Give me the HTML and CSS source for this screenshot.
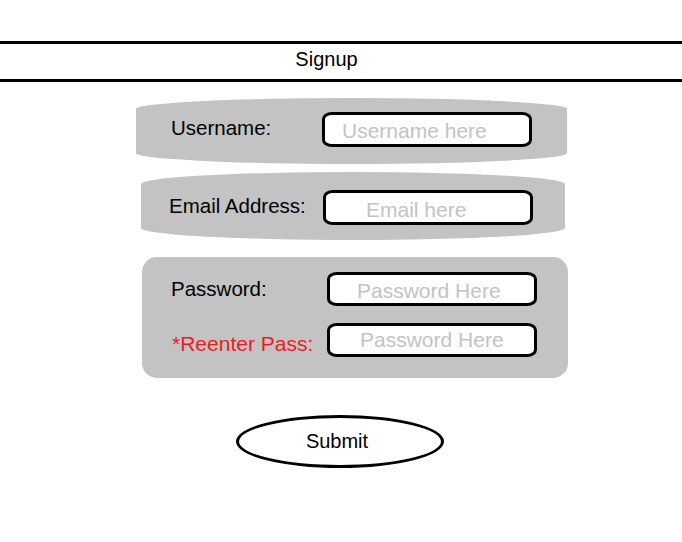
FILE: index.html
```html
<!DOCTYPE html>
<html lang="en">

<head>
    <meta charset="UTF-8">
    <meta name="viewport" content="width=device-width, initial-scale=1.0">
    <link rel="stylesheet" href="styles.css">
</head>

<body>
    <header class="title-bar">Signup</header>

    <form class="signup">
        <div class="group group-user">
            <label class="label label-user" for="user">Username:</label>
            <input class="field field-user" id="user" type="text" placeholder="Username here" />
        </div>

        <div class="group group-email">
            <label class="label label-email" for="email">Email Address:</label>
            <input class="field field-email" id="email" type="text" placeholder="Email here" />
        </div>

        <div class="group group-pass">
            <div class="pass-row">
                <label class="label label-pass" for="pass">Password:</label>
                <input class="field field-pass" id="pass" type="text" placeholder="Password Here" />
            </div>
            <div class="pass-row pass-row-again">
                <label class="label label-again" for="again">*Reenter Pass:</label>
                <input class="field field-again" id="again" type="text" placeholder="Password Here" />
            </div>
        </div>

        <button class="submit-btn" type="button">Submit</button>
    </form>
</body>

</html>
```

FILE: styles.css
```css
body {
    margin: 0;
    font-family: "Liberation Sans", Arial, sans-serif;
    font-size: 20px;
    color: #000;
    background: #fff;
}

.title-bar {
    margin-top: 41px;
    height: 31px;
    border-top: 3px solid #000;
    border-bottom: 3px solid #000;
    padding: 0 29px 4px 0;
    line-height: 31px;
    text-align: center;
}

.signup {
    display: flex;
    flex-direction: column;
    align-items: flex-start;
}

.group {
    display: flex;
    align-items: center;
    box-sizing: border-box;
    background-color: #c3c3c3;
}

.group-user {
    margin: 16px 0 0 136px;
    width: 431px;
    height: 66px;
    padding: 0 0 3px 35px;
    border-radius: 50% / 11px;
}

.group-email {
    margin: 8px 0 0 141px;
    width: 424px;
    height: 68px;
    padding: 3px 0 0 28px;
    border-radius: 50% / 12px;
}

.group-pass {
    flex-direction: column;
    align-items: flex-start;
    margin: 17px 0 0 142px;
    width: 426px;
    height: 121px;
    padding: 15px 0 0 29px;
    border-radius: 15px;
}

.pass-row {
    display: flex;
    align-items: center;
}

.pass-row-again {
    margin-top: 17px;
}

.label {
    font-size: 20.5px;
    line-height: 23px;
}

.label-user {
    width: 151px;
    margin-bottom: 4px;
}

.label-email {
    width: 154px;
    margin-bottom: 4px;
}

.label-pass {
    width: 156px;
    margin-bottom: 2px;
}

.label-again {
    width: 155px;
    margin-top: 6px;
    padding-left: 1px;
    font-size: 21px;
    color: #ed1c24;
}

.field {
    box-sizing: border-box;
    width: 210px;
    height: 35px;
    margin: 0;
    border: 3px solid #000;
    border-radius: 10px / 7px;
    background: #fff;
    font-family: inherit;
    font-size: 21px;
    outline: none;
}

.field::placeholder {
    color: #c3c3c3;
    opacity: 1;
}

.field-user {
    padding: 3px 0 0 17px;
}

.field-email {
    padding: 4px 0 0 40px;
}

.field-pass {
    height: 34px;
    padding: 3px 0 0 27px;
}

.field-again {
    height: 34px;
    padding: 0 0 0 30px;
}

.submit-btn {
    margin: 37px 0 0 236px;
    width: 208px;
    height: 53px;
    border: 3px solid #000;
    border-radius: 50%;
    background: #fff;
    font-family: inherit;
    font-size: 20px;
    color: #000;
    padding: 0 6px 0 0;
}
```
